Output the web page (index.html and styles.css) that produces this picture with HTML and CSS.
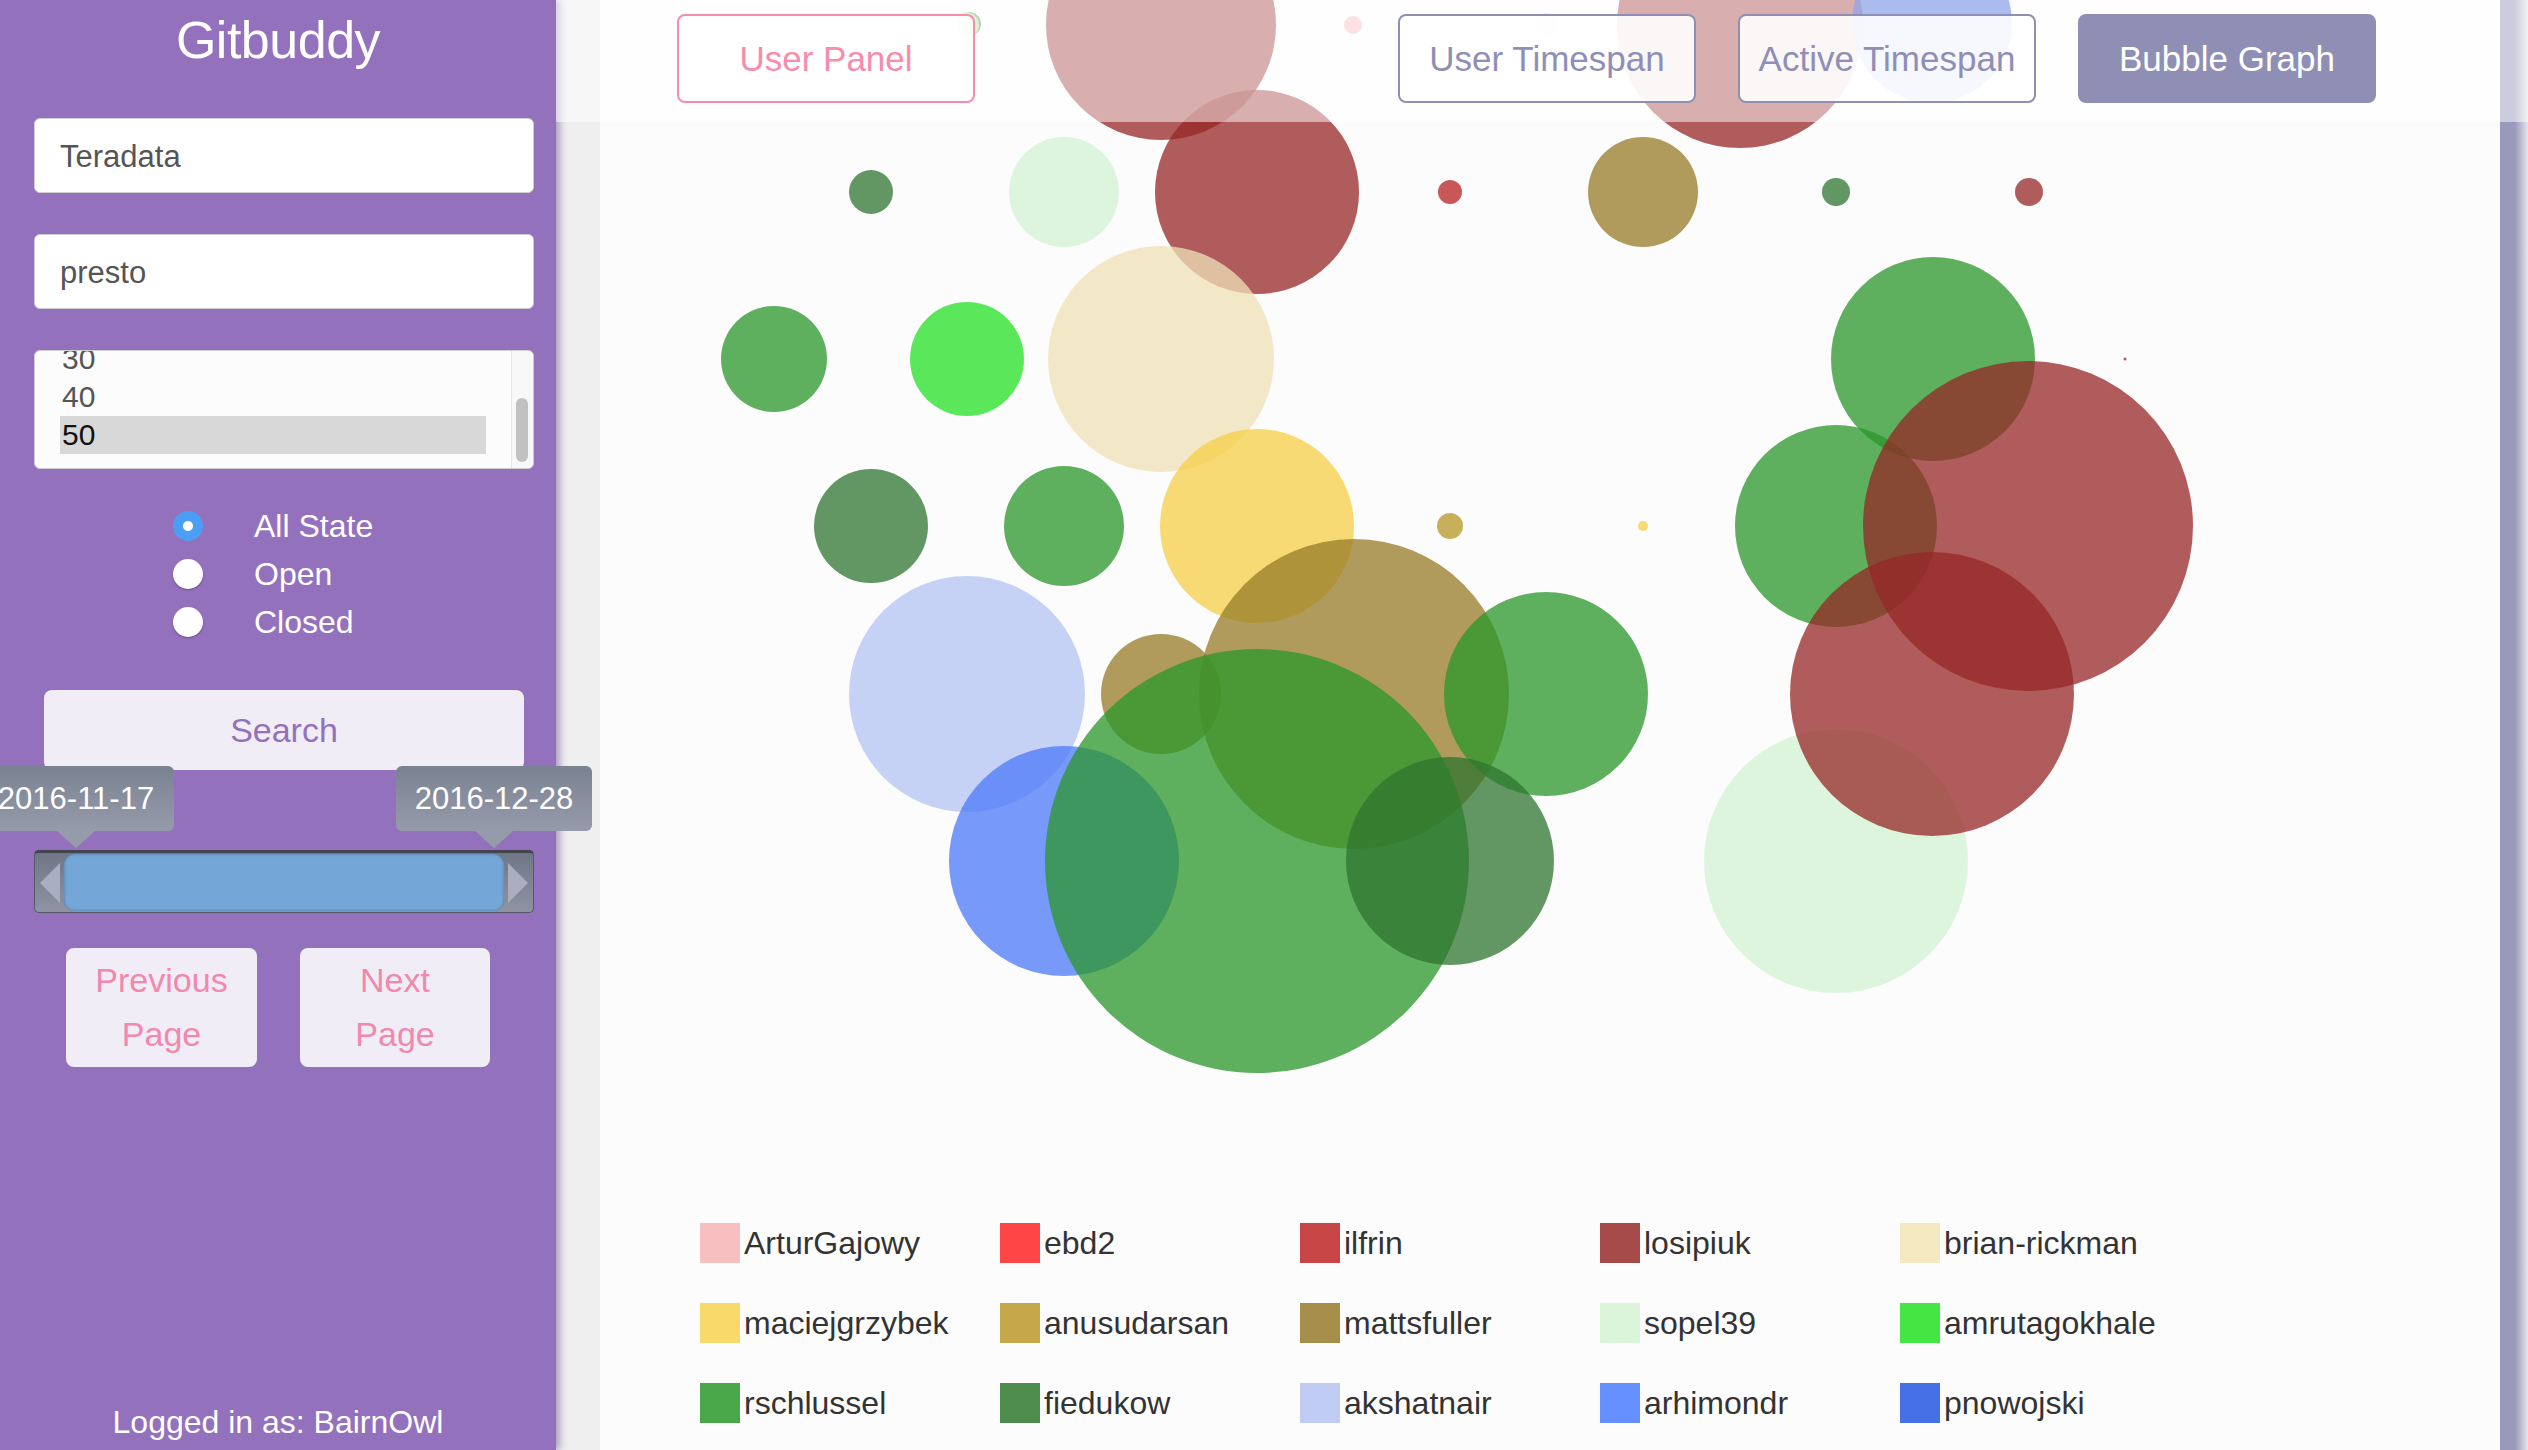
FILE: index.html
```html
<!DOCTYPE html>
<html lang="en">
<head>
<meta charset="utf-8">
<title>Gitbuddy</title>
<link rel="stylesheet" href="styles.css">
</head>
<body>
<div class="app">
  <aside class="sidebar">
    <h1 class="brand">Gitbuddy</h1>
    <div class="form">
      <input class="field" type="text" value="Teradata">
      <input class="field" type="text" value="presto">
      <div class="listbox">
        <div class="list-items">
          <div class="opt">30</div>
          <div class="opt">40</div>
          <div class="opt sel">50</div>
        </div>
        <div class="list-scroll"><div class="thumb"></div></div>
      </div>
      <div class="radios">
        <div class="radio"><span class="dot on"></span>All State</div>
        <div class="radio"><span class="dot"></span>Open</div>
        <div class="radio"><span class="dot"></span>Closed</div>
      </div>
      <button class="search">Search</button>
      <div class="slider">
        <div class="tip tip-left">2016-11-17</div>
        <div class="tip tip-right">2016-12-28</div>
        <div class="track">
          <span class="handle handle-left"></span>
          <div class="range"></div>
          <span class="handle handle-right"></span>
        </div>
      </div>
      <div class="pager">
        <button class="page-btn prev">Previous<br>Page</button>
        <button class="page-btn next">Next<br>Page</button>
      </div>
    </div>
    <div class="login">Logged in as: BairnOwl</div>
  </aside>

  <main class="content">
    <svg class="chart" width="1900" height="1223" viewBox="600 0 1900 1223" xmlns="http://www.w3.org/2000/svg">
      <g class="bubbles" fill-opacity="0.75">
        <circle cx="1161" cy="25" r="115" fill="#972727"/>
        <circle cx="1740" cy="25" r="123" fill="#972727"/>
        <circle cx="1932" cy="23" r="80" fill="#1d4bd3"/>
        <circle cx="969" cy="24" r="12" fill="#299729"/>
        <circle cx="966" cy="25" r="13" fill="#d1f3d1"/>
        <circle cx="1353" cy="25" r="9" fill="#f7b3b3"/>
        <circle cx="1546" cy="25" r="12" fill="#f7d3d3"/>

        <circle cx="871" cy="192" r="22" fill="#2f742f"/>
        <circle cx="1064" cy="192" r="55" fill="#d1f3d1"/>
        <circle cx="1257" cy="192" r="102" fill="#972727"/>
        <circle cx="1450" cy="192" r="12" fill="#b72121"/>
        <circle cx="1643" cy="192" r="55" fill="#977b27"/>
        <circle cx="1836" cy="192" r="14" fill="#2f742f"/>
        <circle cx="2029" cy="192" r="14" fill="#972727"/>

        <circle cx="774" cy="359" r="53" fill="#299729"/>
        <circle cx="967" cy="359" r="57" fill="#24e124"/>
        <circle cx="1161" cy="359" r="113" fill="#efe1b7"/>
        <circle cx="1933" cy="359" r="102" fill="#299729"/>
        <circle cx="2125" cy="359" r="1.5" fill="#972727"/>

        <circle cx="871" cy="526" r="57" fill="#2f742f"/>
        <circle cx="1064" cy="526" r="60" fill="#299729"/>
        <circle cx="1257" cy="526" r="97" fill="#f5cf45"/>
        <circle cx="1450" cy="526" r="13" fill="#b79724"/>
        <circle cx="1643" cy="526" r="5" fill="#f5cf45"/>
        <circle cx="1836" cy="526" r="101" fill="#299729"/>
        <circle cx="2028" cy="526" r="165" fill="#972727"/>

        <circle cx="1836" cy="861" r="132" fill="#d1f3d1"/>

        <circle cx="967" cy="694" r="118" fill="#b3c4f3"/>
        <circle cx="1161" cy="694" r="60" fill="#977b27"/>
        <circle cx="1354" cy="694" r="155" fill="#977b27"/>
        <circle cx="1546" cy="694" r="102" fill="#299729"/>
        <circle cx="1932" cy="694" r="142" fill="#972727"/>

        <circle cx="1064" cy="861" r="115" fill="#4b78f9"/>
        <circle cx="1257" cy="861" r="212" fill="#299729"/>
        <circle cx="1450" cy="861" r="104" fill="#2f742f"/>
      </g>
    </svg>

    <div class="legend">
      <div class="item"><span class="swatch" style="background:#f7bfbf"></span>ArturGajowy</div>
      <div class="item"><span class="swatch" style="background:#ff4646"></span>ebd2</div>
      <div class="item"><span class="swatch" style="background:#c84646"></span>ilfrin</div>
      <div class="item"><span class="swatch" style="background:#a64a4a"></span>losipiuk</div>
      <div class="item"><span class="swatch" style="background:#f4e8c1"></span>brian-rickman</div>
      <div class="item"><span class="swatch" style="background:#fad96b"></span>maciejgrzybek</div>
      <div class="item"><span class="swatch" style="background:#c6a84a"></span>anusudarsan</div>
      <div class="item"><span class="swatch" style="background:#a58f4a"></span>mattsfuller</div>
      <div class="item"><span class="swatch" style="background:#daf5da"></span>sopel39</div>
      <div class="item"><span class="swatch" style="background:#44e644"></span>amrutagokhale</div>
      <div class="item"><span class="swatch" style="background:#4aa84a"></span>rschlussel</div>
      <div class="item"><span class="swatch" style="background:#4e8c4e"></span>fiedukow</div>
      <div class="item"><span class="swatch" style="background:#c0ccf4"></span>akshatnair</div>
      <div class="item"><span class="swatch" style="background:#6690ff"></span>arhimondr</div>
      <div class="item"><span class="swatch" style="background:#4670e6"></span>pnowojski</div>
    </div>
  </main>

  <div class="rightbar"></div>

  <header class="topbar">
    <div class="nav-group">
      <button class="nav-btn pink">User Panel</button>
    </div>
    <div class="nav-group">
      <button class="nav-btn">User Timespan</button>
      <button class="nav-btn">Active Timespan</button>
      <button class="nav-btn active">Bubble Graph</button>
    </div>
  </header>
</div>
</body>
</html>
```

FILE: styles.css
```css
html, body {
  margin: 0;
  padding: 0;
}

body {
  width: 2528px;
  height: 1450px;
  overflow: hidden;
  background: #efefef;
  font-family: "Liberation Sans", Arial, sans-serif;
}

.app {
  display: flex;
  height: 1450px;
  position: relative;
}

/* ---------- Sidebar ---------- */
.sidebar {
  width: 556px;
  flex: none;
  background: #9471bc;
  display: flex;
  flex-direction: column;
  position: relative;
  z-index: 2;
  box-shadow: 4px 0 7px rgba(90, 60, 130, 0.45);
}

.brand {
  margin: 0;
  height: 118px;
  line-height: 80px;
  text-align: center;
  color: #ffffff;
  font-size: 52px;
  font-weight: 400;
  letter-spacing: -0.5px;
}

.form {
  padding: 0 22px 0 34px;
}

.field {
  display: block;
  width: 100%;
  height: 75px;
  box-sizing: border-box;
  margin: 0 0 41px 0;
  border: 1px solid #cfcfcf;
  border-radius: 6px;
  padding: 2px 0 0 25px;
  background: #ffffff;
  color: #555555;
  font-family: "Liberation Sans", Arial, sans-serif;
  font-size: 31px;
  outline: none;
}

.listbox {
  height: 119px;
  box-sizing: border-box;
  border: 1px solid #cfcfcf;
  border-radius: 6px;
  background: #fcfcfc;
  display: flex;
  overflow: hidden;
  margin-bottom: 33px;
}

.list-items {
  flex: 1;
  padding: 0 25px 0 25px;
  margin-top: -11px;
}

.opt {
  height: 38px;
  line-height: 38px;
  font-size: 30px;
  color: #555555;
  padding-left: 2px;
}

.opt.sel {
  background: #d8d8d8;
  color: #111111;
}

.list-scroll {
  width: 22px;
  flex: none;
  background: #f8f8f8;
  border-left: 1px solid #e6e6e6;
  padding: 47px 0 0 4px;
  box-sizing: border-box;
}

.thumb {
  width: 12px;
  height: 64px;
  border-radius: 6px;
  background: #c1c1c1;
}

.radios {
  padding-left: 139px;
  margin-bottom: 44px;
}

.radio {
  display: flex;
  align-items: center;
  height: 48px;
  color: #ffffff;
  font-size: 32px;
}

.dot {
  width: 30px;
  height: 30px;
  flex: none;
  border-radius: 50%;
  background: #ffffff;
  box-shadow: 0 1px 2px rgba(60, 40, 90, 0.45);
  margin-right: 51px;
}

.dot.on {
  background: radial-gradient(circle, #ffffff 0, #ffffff 4.5px, #4a9ef5 5.5px);
  box-shadow: none;
}

.search {
  display: block;
  margin-left: 10px;
  width: 480px;
  height: 80px;
  border: none;
  border-radius: 8px;
  background: #f1edf6;
  color: #9471bc;
  font-family: "Liberation Sans", Arial, sans-serif;
  font-size: 34px;
  padding: 0;
}

.slider {
  position: relative;
  padding-top: 80px;
}

.tip {
  position: absolute;
  top: -4px;
  width: 196px;
  height: 65px;
  line-height: 65px;
  text-align: center;
  color: #ffffff;
  font-size: 31px;
  border-radius: 6px;
  background: linear-gradient(#7a8291, #969bab);
  z-index: 3;
}

.tip::after {
  content: "";
  position: absolute;
  left: 79px;
  top: 65px;
  border-left: 19px solid transparent;
  border-right: 19px solid transparent;
  border-top: 17px solid #969bab;
}

.tip-left {
  left: -56px;
}

.tip-right {
  left: 362px;
}

.track {
  height: 63px;
  box-sizing: border-box;
  border: 1px solid #555a66;
  border-top: 3px solid #42454e;
  border-radius: 5px;
  background: linear-gradient(#6f7686, #8d93a2);
  display: flex;
  align-items: center;
  padding: 0 5px;
}

.handle {
  width: 0;
  height: 0;
  flex: none;
  border-top: 20px solid transparent;
  border-bottom: 20px solid transparent;
}

.handle-left {
  border-right: 20px solid #aaaec0;
}

.handle-right {
  border-left: 20px solid #aaaec0;
}

.range {
  flex: 1;
  height: 57px;
  margin: 0 4px;
  border-radius: 10px;
  background: #74a6d7;
  box-shadow: inset 0 0 3px rgba(40, 60, 90, 0.45);
}

.pager {
  display: flex;
  gap: 43px;
  padding-left: 32px;
  margin-top: 35px;
}

.page-btn {
  height: 119px;
  border: none;
  border-radius: 8px;
  background: #f1edf6;
  color: #f288ae;
  font-family: "Liberation Sans", Arial, sans-serif;
  font-size: 34px;
  line-height: 54px;
  padding: 0 0 2px 0;
}

.page-btn.prev {
  width: 191px;
}

.page-btn.next {
  width: 190px;
}

.login {
  margin-top: auto;
  padding-bottom: 8px;
  line-height: 40px;
  text-align: center;
  color: #ffffff;
  font-size: 32px;
}

/* ---------- Main content ---------- */
.content {
  flex: 1;
  margin-left: 44px;
  background: #fcfcfc;
  min-width: 0;
}

.chart {
  display: block;
}

.legend {
  display: grid;
  grid-template-columns: repeat(5, 300px);
  row-gap: 40px;
  padding-left: 100px;
}

.item {
  display: flex;
  align-items: center;
  gap: 4px;
  height: 40px;
  font-size: 32px;
  color: #333333;
}

.swatch {
  width: 40px;
  height: 40px;
  flex: none;
}

.rightbar {
  width: 28px;
  flex: none;
  background: linear-gradient(to right, #9999bb 0, #9999bb 15px, #e6e6ec 28px);
}

/* ---------- Top navigation overlay ---------- */
.topbar {
  position: absolute;
  top: 0;
  left: 556px;
  right: 0;
  height: 122px;
  box-sizing: border-box;
  padding: 14px 152px 0 121px;
  background: rgba(255, 255, 255, 0.5);
  display: flex;
  justify-content: space-between;
  align-items: flex-start;
  z-index: 3;
}

.nav-group {
  display: flex;
  gap: 42px;
}

.nav-btn {
  width: 298px;
  height: 89px;
  box-sizing: border-box;
  border: 2px solid #8f8fb6;
  border-radius: 8px;
  background: rgba(255, 255, 255, 0.9);
  color: #8f8fb6;
  font-family: "Liberation Sans", Arial, sans-serif;
  font-size: 35px;
  padding: 0;
}

.nav-btn.pink {
  border-color: #f78cab;
  color: #f78cab;
}

.nav-btn.active {
  background: #8f8fb6;
  color: #ffffff;
}
```
